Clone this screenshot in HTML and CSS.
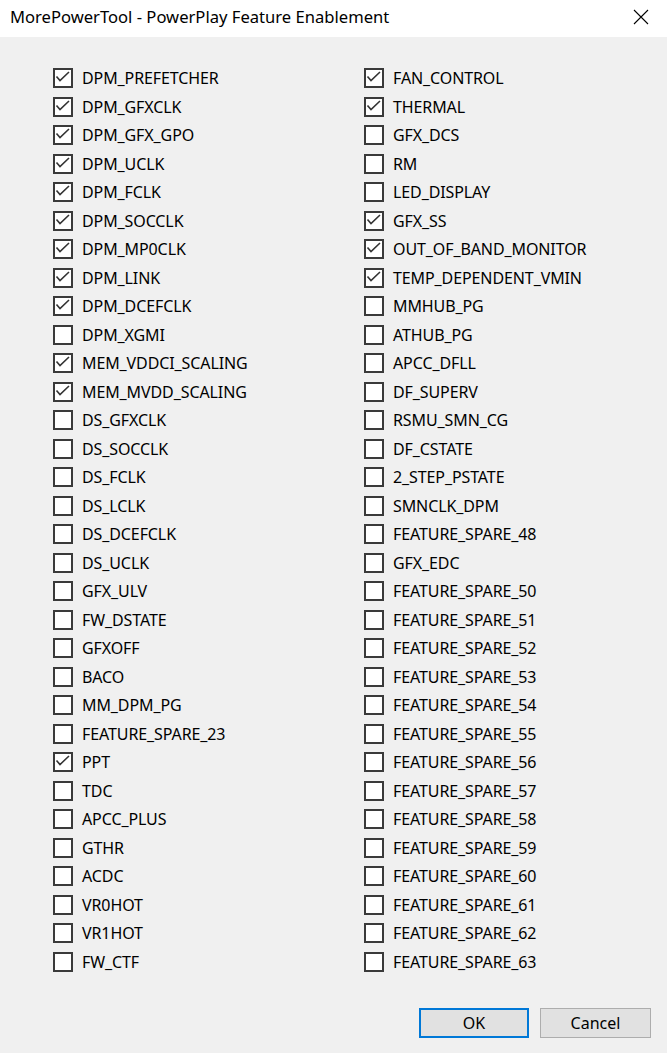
FILE: index.html
```html
<!DOCTYPE html>
<html>
<head>
<meta charset="utf-8">
<link rel="stylesheet" href="styles.css">
</head>
<body>
<div class="window">
  <div class="titlebar">
    <span class="title">MorePowerTool - PowerPlay Feature Enablement</span>
    <span class="close"><svg width="16" height="16" viewBox="0 0 16 16"><path d="M1 1L15 15M15 1L1 15" stroke="#000" stroke-width="1.1" fill="none"/></svg></span>
  </div>
  <div class="content">
    <div class="grid">
      <div class="col">
        <label class="row"><span class="box on"></span><span class="lbl">DPM_PREFETCHER</span></label>
        <label class="row"><span class="box on"></span><span class="lbl">DPM_GFXCLK</span></label>
        <label class="row"><span class="box on"></span><span class="lbl">DPM_GFX_GPO</span></label>
        <label class="row"><span class="box on"></span><span class="lbl">DPM_UCLK</span></label>
        <label class="row"><span class="box on"></span><span class="lbl">DPM_FCLK</span></label>
        <label class="row"><span class="box on"></span><span class="lbl">DPM_SOCCLK</span></label>
        <label class="row"><span class="box on"></span><span class="lbl">DPM_MP0CLK</span></label>
        <label class="row"><span class="box on"></span><span class="lbl">DPM_LINK</span></label>
        <label class="row"><span class="box on"></span><span class="lbl">DPM_DCEFCLK</span></label>
        <label class="row"><span class="box"></span><span class="lbl">DPM_XGMI</span></label>
        <label class="row"><span class="box on"></span><span class="lbl">MEM_VDDCI_SCALING</span></label>
        <label class="row"><span class="box on"></span><span class="lbl">MEM_MVDD_SCALING</span></label>
        <label class="row"><span class="box"></span><span class="lbl">DS_GFXCLK</span></label>
        <label class="row"><span class="box"></span><span class="lbl">DS_SOCCLK</span></label>
        <label class="row"><span class="box"></span><span class="lbl">DS_FCLK</span></label>
        <label class="row"><span class="box"></span><span class="lbl">DS_LCLK</span></label>
        <label class="row"><span class="box"></span><span class="lbl">DS_DCEFCLK</span></label>
        <label class="row"><span class="box"></span><span class="lbl">DS_UCLK</span></label>
        <label class="row"><span class="box"></span><span class="lbl">GFX_ULV</span></label>
        <label class="row"><span class="box"></span><span class="lbl">FW_DSTATE</span></label>
        <label class="row"><span class="box"></span><span class="lbl">GFXOFF</span></label>
        <label class="row"><span class="box"></span><span class="lbl">BACO</span></label>
        <label class="row"><span class="box"></span><span class="lbl">MM_DPM_PG</span></label>
        <label class="row"><span class="box"></span><span class="lbl">FEATURE_SPARE_23</span></label>
        <label class="row"><span class="box on"></span><span class="lbl">PPT</span></label>
        <label class="row"><span class="box"></span><span class="lbl">TDC</span></label>
        <label class="row"><span class="box"></span><span class="lbl">APCC_PLUS</span></label>
        <label class="row"><span class="box"></span><span class="lbl">GTHR</span></label>
        <label class="row"><span class="box"></span><span class="lbl">ACDC</span></label>
        <label class="row"><span class="box"></span><span class="lbl">VR0HOT</span></label>
        <label class="row"><span class="box"></span><span class="lbl">VR1HOT</span></label>
        <label class="row"><span class="box"></span><span class="lbl">FW_CTF</span></label>
      </div>
      <div class="col">
        <label class="row"><span class="box on"></span><span class="lbl">FAN_CONTROL</span></label>
        <label class="row"><span class="box on"></span><span class="lbl">THERMAL</span></label>
        <label class="row"><span class="box"></span><span class="lbl">GFX_DCS</span></label>
        <label class="row"><span class="box"></span><span class="lbl">RM</span></label>
        <label class="row"><span class="box"></span><span class="lbl">LED_DISPLAY</span></label>
        <label class="row"><span class="box on"></span><span class="lbl">GFX_SS</span></label>
        <label class="row"><span class="box on"></span><span class="lbl">OUT_OF_BAND_MONITOR</span></label>
        <label class="row"><span class="box on"></span><span class="lbl">TEMP_DEPENDENT_VMIN</span></label>
        <label class="row"><span class="box"></span><span class="lbl">MMHUB_PG</span></label>
        <label class="row"><span class="box"></span><span class="lbl">ATHUB_PG</span></label>
        <label class="row"><span class="box"></span><span class="lbl">APCC_DFLL</span></label>
        <label class="row"><span class="box"></span><span class="lbl">DF_SUPERV</span></label>
        <label class="row"><span class="box"></span><span class="lbl">RSMU_SMN_CG</span></label>
        <label class="row"><span class="box"></span><span class="lbl">DF_CSTATE</span></label>
        <label class="row"><span class="box"></span><span class="lbl">2_STEP_PSTATE</span></label>
        <label class="row"><span class="box"></span><span class="lbl">SMNCLK_DPM</span></label>
        <label class="row"><span class="box"></span><span class="lbl">FEATURE_SPARE_48</span></label>
        <label class="row"><span class="box"></span><span class="lbl">GFX_EDC</span></label>
        <label class="row"><span class="box"></span><span class="lbl">FEATURE_SPARE_50</span></label>
        <label class="row"><span class="box"></span><span class="lbl">FEATURE_SPARE_51</span></label>
        <label class="row"><span class="box"></span><span class="lbl">FEATURE_SPARE_52</span></label>
        <label class="row"><span class="box"></span><span class="lbl">FEATURE_SPARE_53</span></label>
        <label class="row"><span class="box"></span><span class="lbl">FEATURE_SPARE_54</span></label>
        <label class="row"><span class="box"></span><span class="lbl">FEATURE_SPARE_55</span></label>
        <label class="row"><span class="box"></span><span class="lbl">FEATURE_SPARE_56</span></label>
        <label class="row"><span class="box"></span><span class="lbl">FEATURE_SPARE_57</span></label>
        <label class="row"><span class="box"></span><span class="lbl">FEATURE_SPARE_58</span></label>
        <label class="row"><span class="box"></span><span class="lbl">FEATURE_SPARE_59</span></label>
        <label class="row"><span class="box"></span><span class="lbl">FEATURE_SPARE_60</span></label>
        <label class="row"><span class="box"></span><span class="lbl">FEATURE_SPARE_61</span></label>
        <label class="row"><span class="box"></span><span class="lbl">FEATURE_SPARE_62</span></label>
        <label class="row"><span class="box"></span><span class="lbl">FEATURE_SPARE_63</span></label>
      </div>
    </div>
    <div class="buttons">
      <button class="btn default">OK</button>
      <button class="btn">Cancel</button>
    </div>
  </div>
</div>
</body>
</html>
```
FILE: styles.css
```css
html, body {
  margin: 0;
  padding: 0;
  background: #f0f0f0;
}
body {
  font-family: "Noto Sans", "Open Sans", sans-serif;
  color: #000;
  width: 667px;
  height: 1053px;
  overflow: hidden;
}
.window {
  display: flex;
  flex-direction: column;
  height: 1053px;
}
.titlebar {
  height: 37px;
  background: #fff;
  display: flex;
  align-items: center;
  justify-content: space-between;
  padding: 0 18px 0 10px;
  flex-shrink: 0;
}
.title {
  font-size: 16.6px;
  color: #000;
  margin-top: -4px;
}
.close {
  display: flex;
  margin-top: -4px;
}
.content {
  flex: 1;
  display: flex;
  flex-direction: column;
  padding: 26.75px 16px 0 53px;
}
.grid {
  display: grid;
  grid-template-columns: 311px 1fr;
}
.col {
  display: flex;
  flex-direction: column;
}
.row {
  height: 28.5px;
  display: flex;
  align-items: center;
  gap: 9px;
}
.box {
  width: 16px;
  height: 16px;
  border: 2px solid #3a3a3a;
  background: #fff;
  flex-shrink: 0;
}
.box.on {
  background: #fff url("data:image/svg+xml;utf8,<svg xmlns='http://www.w3.org/2000/svg' width='16' height='16' viewBox='0 0 16 16'><path d='M1.5 6.5L5 10.5L14 2' stroke='%23333' stroke-width='1.6' fill='none'/></svg>") no-repeat 0 0;
}
.lbl {
  font-size: 16px;
  letter-spacing: -0.1px;
  white-space: nowrap;
}
.buttons {
  display: flex;
  justify-content: flex-end;
  gap: 11px;
  margin-top: 32px;
}
.btn {
  width: 111px;
  height: 30px;
  background: #e1e1e1;
  border: 1px solid #adadad;
  font-family: "Noto Sans", "Open Sans", sans-serif;
  font-size: 16px;
  color: #000;
  padding: 0;
}
.btn.default {
  width: 110px;
  border: 2px solid #0078d7;
}
```
